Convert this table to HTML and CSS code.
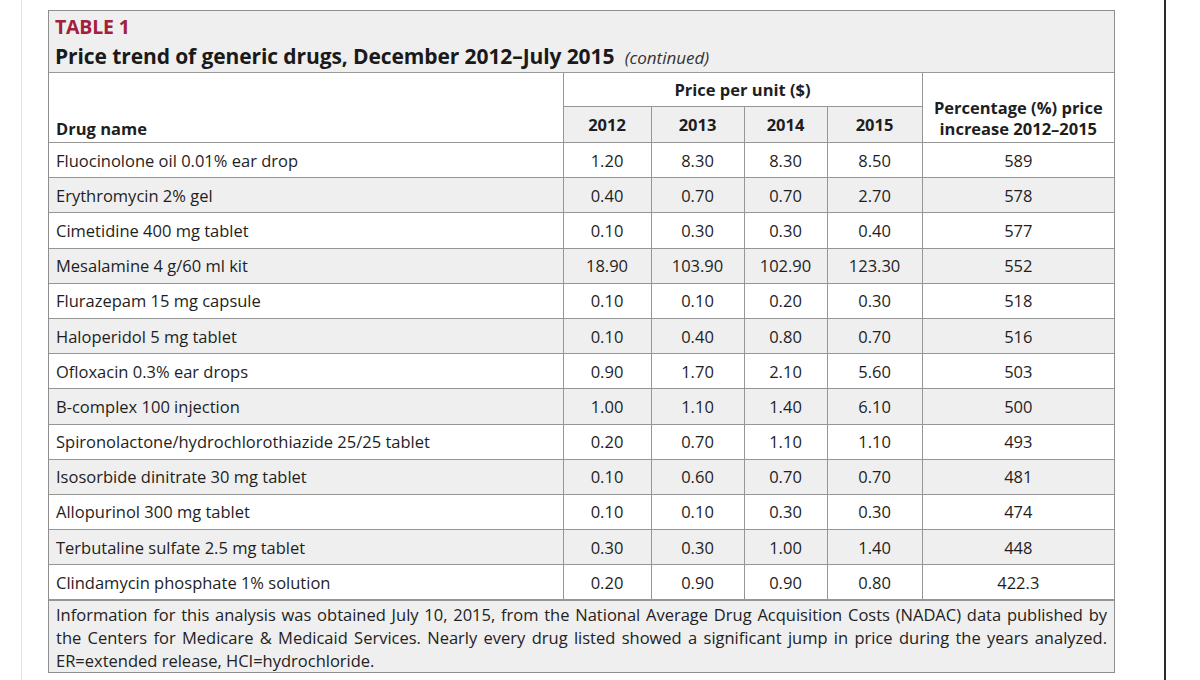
FILE: index.html
```html
<!DOCTYPE html>
<html lang="en">
<head>
<meta charset="utf-8">
<title>Table 1 – Price trend of generic drugs</title>
<link rel="stylesheet" href="styles.css">
</head>
<body>
<div class="page">
  <div class="sheet">
    <div class="caption">
      <div class="label">TABLE 1</div>
      <div class="title">Price trend of generic drugs, December 2012–July 2015 <span class="cont">(continued)</span></div>
    </div>
    <table class="data">
      <colgroup>
        <col class="c-name">
        <col class="c-y12">
        <col class="c-y13">
        <col class="c-y14">
        <col class="c-y15">
        <col class="c-pct">
      </colgroup>
      <thead>
        <tr class="h1">
          <th rowspan="2" class="th-name">Drug name</th>
          <th colspan="4" class="th-group">Price per unit ($)</th>
          <th rowspan="2" class="th-pct">Percentage (%) price<br>increase 2012–2015</th>
        </tr>
        <tr class="h2">
          <th>2012</th><th>2013</th><th>2014</th><th>2015</th>
        </tr>
      </thead>
      <tbody>
        <tr><td>Fluocinolone oil 0.01% ear drop</td><td>1.20</td><td>8.30</td><td>8.30</td><td>8.50</td><td>589</td></tr>
        <tr><td>Erythromycin 2% gel</td><td>0.40</td><td>0.70</td><td>0.70</td><td>2.70</td><td>578</td></tr>
        <tr><td>Cimetidine 400 mg tablet</td><td>0.10</td><td>0.30</td><td>0.30</td><td>0.40</td><td>577</td></tr>
        <tr><td>Mesalamine 4 g/60 ml kit</td><td>18.90</td><td>103.90</td><td>102.90</td><td>123.30</td><td>552</td></tr>
        <tr><td>Flurazepam 15 mg capsule</td><td>0.10</td><td>0.10</td><td>0.20</td><td>0.30</td><td>518</td></tr>
        <tr><td>Haloperidol 5 mg tablet</td><td>0.10</td><td>0.40</td><td>0.80</td><td>0.70</td><td>516</td></tr>
        <tr><td>Ofloxacin 0.3% ear drops</td><td>0.90</td><td>1.70</td><td>2.10</td><td>5.60</td><td>503</td></tr>
        <tr><td>B-complex 100 injection</td><td>1.00</td><td>1.10</td><td>1.40</td><td>6.10</td><td>500</td></tr>
        <tr><td>Spironolactone/hydrochlorothiazide 25/25 tablet</td><td>0.20</td><td>0.70</td><td>1.10</td><td>1.10</td><td>493</td></tr>
        <tr><td>Isosorbide dinitrate 30 mg tablet</td><td>0.10</td><td>0.60</td><td>0.70</td><td>0.70</td><td>481</td></tr>
        <tr><td>Allopurinol 300 mg tablet</td><td>0.10</td><td>0.10</td><td>0.30</td><td>0.30</td><td>474</td></tr>
        <tr><td>Terbutaline sulfate 2.5 mg tablet</td><td>0.30</td><td>0.30</td><td>1.00</td><td>1.40</td><td>448</td></tr>
        <tr><td>Clindamycin phosphate 1% solution</td><td>0.20</td><td>0.90</td><td>0.90</td><td>0.80</td><td>422.3</td></tr>
      </tbody>
    </table>
    <div class="note">Information for this analysis was obtained July 10, 2015, from the National Average Drug Acquisition Costs (NADAC) data published by the Centers for Medicare &amp; Medicaid Services. Nearly every drug listed showed a significant jump in price during the years analyzed. ER=extended release, HCI=hydrochloride.</div>
  </div>
</div>
</body>
</html>
```

FILE: styles.css
```css
html, body {
  margin: 0;
  padding: 0;
  background: #ffffff;
}

body {
  font-family: "Open Sans", "Noto Sans", "Liberation Sans", sans-serif;
  color: #1e1e1e;
}

.page {
  box-sizing: border-box;
  width: 1145px;
  height: 680px;
  margin-left: 21px;
  border-left: 1px solid #e2e2e2;
  border-right: 2px solid #2a2a2a;
  padding: 10px 0 0 26px;
}

.sheet {
  width: 1067px;
  box-sizing: border-box;
  border: 1px solid #8e8e8e;
}

.caption {
  background: #efefef;
  height: 62px;
  box-sizing: border-box;
  padding: 4px 0 0 6px;
  border-bottom: 1px solid #9a9a9a;
}

.label {
  color: #a3203b;
  font-weight: 700;
  font-size: 19.5px;
  line-height: 24px;
  letter-spacing: -0.2px;
}

.title {
  font-weight: 700;
  font-size: 21px;
  line-height: 30px;
  margin-top: 2px;
  letter-spacing: -0.1px;
  color: #1a1a1a;
}

.cont {
  font-weight: 400;
  font-style: italic;
  font-size: 17px;
  letter-spacing: 0;
  margin-left: 5px;
  color: #333;
}

.data {
  width: 100%;
  border-collapse: collapse;
  table-layout: fixed;
  font-size: 16.5px;
}

.c-name { width: 514px; }
.c-y12 { width: 88px; }
.c-y13 { width: 93px; }
.c-y14 { width: 83px; }
.c-y15 { width: 95px; }
.c-pct { width: 192px; }

.data th,
.data td {
  border: 1px solid #969696;
  padding: 0;
  text-align: center;
  color: #1e1e1e;
}

.data tr > :first-child { border-left: none; }
.data tr > :last-child { border-right: none; }
.data thead tr:first-child > * { border-top: none; }

.data th {
  font-weight: 700;
  font-size: 16.5px;
}

.h1 th { height: 33px; }
.h2 th { height: 35px; background: #efefef; }

.th-name {
  text-align: left !important;
  vertical-align: bottom;
  padding: 0 0 2px 7px !important;
  background: #ffffff;
}

.th-group { vertical-align: middle; }

.th-pct {
  vertical-align: bottom;
  padding-bottom: 3px !important;
  line-height: 21px;
  background: #ffffff;
}

.data tbody td {
  height: 34.2px;
  font-size: 16.5px;
}

.data tbody td:first-child {
  text-align: left;
  padding-left: 7px;
}

.data tbody tr:nth-child(even) td { background: #efefef; }

.note {
  background: #efefef;
  border-top: 1px solid #969696;
  padding: 2px 7px 4px 7px;
  font-size: 16.5px;
  line-height: 23px;
  color: #222;
  height: 72px;
  box-sizing: border-box;
  text-align: justify;
}
```
